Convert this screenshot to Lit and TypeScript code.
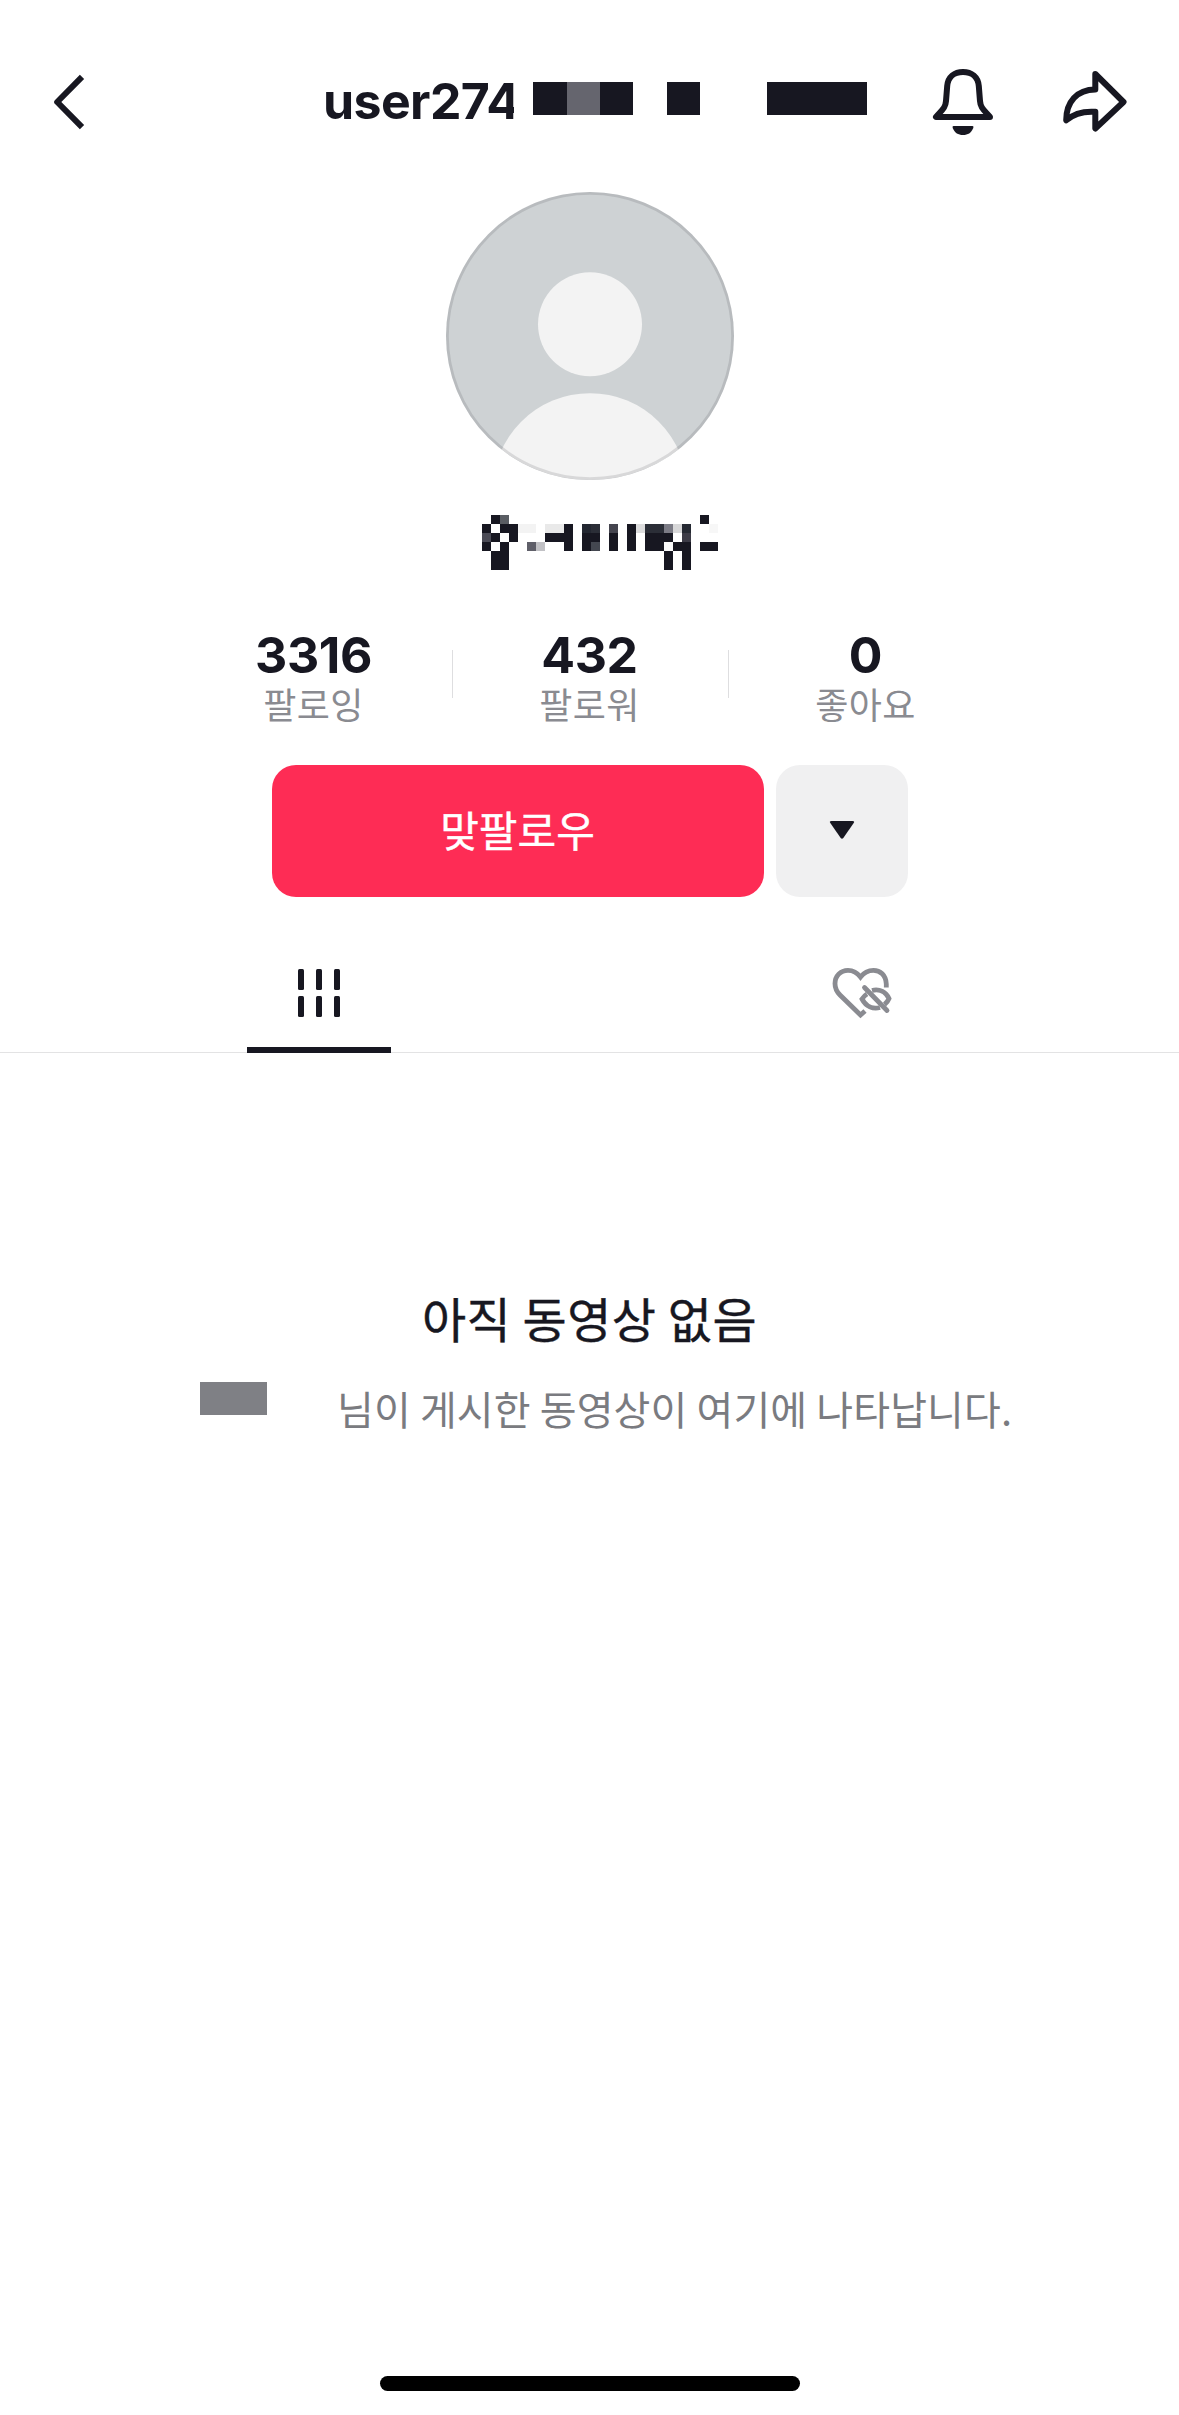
import { LitElement, html, svg, css } from "lit";
import { customElement } from "lit/decorators.js";

const INK = "#171721";

/* Masked nickname: [x, y, width, height, colour] on a 236 x 55 field. */
const MASK: [number, number, number, number, string][] = [
  [9, 0, 9, 9, INK], [18, 0, 9, 9, "#5a5d63"], [218, 0, 9, 9, INK],
  [0, 9, 9, 9, INK], [18, 9, 18, 9, INK], [36, 9, 18, 9, "#f3f3f3"],
  [63, 9, 19, 9, "#e9e9e9"], [82, 9, 9, 9, INK], [100, 9, 9, 9, "#232731"],
  [109, 9, 9, 9, "#2b2e37"], [127, 9, 9, 9, "#45454f"], [145, 9, 9, 9, INK],
  [154, 9, 9, 9, "#dcdcdd"], [163, 9, 19, 9, "#2b2e37"], [182, 9, 9, 9, "#7b7b85"],
  [191, 9, 9, 9, "#d7d7d8"], [200, 9, 9, 9, "#252932"], [227, 9, 9, 9, "#f7f7f7"],
  [0, 18, 9, 9, "#4b4b56"], [9, 18, 9, 9, INK], [27, 18, 9, 9, INK],
  [63, 18, 28, 9, INK], [100, 18, 18, 9, INK], [127, 18, 9, 18, INK],
  [145, 18, 9, 18, INK], [163, 18, 28, 9, INK], [200, 18, 9, 9, "#3c3b46"],
  [0, 27, 9, 9, INK], [18, 27, 9, 9, INK], [45, 27, 9, 9, "#5f5f69"],
  [54, 27, 9, 9, "#c1c1c5"], [82, 27, 9, 9, INK], [100, 27, 9, 9, INK],
  [109, 27, 9, 9, "#444750"], [163, 27, 19, 9, INK], [182, 27, 9, 9, "#fafafa"],
  [191, 27, 18, 9, INK], [218, 27, 18, 9, INK],
  [9, 36, 18, 19, INK], [182, 36, 9, 19, INK], [200, 36, 9, 19, INK],
];

const STATS = [
  { value: "3316", label: "팔로잉" },
  { value: "432", label: "팔로워" },
  { value: "0", label: "좋아요" },
];

@customElement("app-root")
export class AppRoot extends LitElement {
  static styles = css`
    :host {
      display: flex;
      flex-direction: column;
      align-items: center;
      width: 1179px;
      height: 2415px;
      box-sizing: border-box;
      padding-bottom: 24px;
      overflow: hidden;
      background: #fff;
      color: #171721;
      font-family: "Noto Sans CJK KR", sans-serif;
    }
    * { box-sizing: border-box; }
    svg { display: block; flex: none; }
    .header {
      display: flex;
      align-items: center;
      width: 100%;
      height: 132px;
      margin-top: 36px;
      padding: 0 48px 0 42px;
    }
    .title { display: flex; align-items: center; height: 60px; margin-left: 221px; width: 553px; }
    .user {
      flex: none;
      margin-bottom: 3px;
      white-space: nowrap;
      font: 700 50px/60px Inter, sans-serif;
      letter-spacing: -0.6px;
    }
    .blocks { position: absolute; left: 514px; top: 82px; }
    .bell { margin-left: 45px; }
    .share { margin-left: 66px; }
    .avatar { margin-top: 24px; }
    .nick { margin-top: 35px; margin-left: 21px; }
    .stats { display: flex; align-items: flex-start; height: 114px; margin-top: 54px; }
    .stat { display: flex; flex-direction: column; align-items: center; width: 275px; padding-top: 6px; }
    .value { font: 700 50px/50px Inter, sans-serif; letter-spacing: -0.4px; }
    .label { font-size: 36px; line-height: 46px; letter-spacing: 0.3px; color: #8a8b91; }
    .rule { width: 1px; height: 48px; margin: 26px -1px 0 1px; background: #dedee0; }
    .actions { display: flex; gap: 12px; margin-top: 27px; }
    .follow, .more {
      display: flex;
      align-items: center;
      justify-content: center;
      height: 132px;
      border-radius: 24px;
    }
    .follow {
      width: 492px;
      padding-bottom: 4px;
      background: #fe2c55;
      color: #fff;
      font-size: 42px;
      font-weight: 400;
      line-height: 60px;
      -webkit-text-stroke: 0.4px #fff;
    }
    .more { width: 132px; padding-bottom: 2px; background: #f0f0f1; }
    .tabs {
      display: flex;
      justify-content: center;
      gap: 399px;
      width: 100%;
      height: 114px;
      margin-top: 42px;
      padding-left: 2px;
      border-bottom: 1px solid #e3e3e4;
    }
    .tab { display: flex; flex-direction: column; align-items: center; width: 144px; height: 114px; padding-top: 24px; }
    .active { border-bottom: 6px solid #171721; }
    .empty { display: flex; flex-direction: column; align-items: center; width: 100%; margin-top: 229px; }
    .heading {
      font-size: 48px;
      font-weight: 400;
      line-height: 70px;
      letter-spacing: 0.5px;
      -webkit-text-stroke: 0.4px #171721;
    }
    .note { display: flex; width: 811px; height: 60px; margin-top: 28px; margin-left: 32px; color: #7a7b80; }
    .redacted { flex: none; width: 67px; height: 33px; margin-top: 2px; background: #7f8085; }
    .text {
      flex: none;
      margin-top: -2px;
      margin-left: 70px;
      font-size: 40px;
      line-height: 60px;
      letter-spacing: 0.12px;
      white-space: nowrap;
    }
    .home { width: 420px; height: 15px; margin-top: auto; border-radius: 8px; background: #000; }
  `;

  render() {
    return html`
      <div class="header">
        <svg width="60" height="60" viewBox="42 72 60 60" fill="none" stroke=${INK} stroke-width="6" stroke-linejoin="round">
          <path d="M82 76.800L57.200 102L82 127.200" />
        </svg>
        <div class="title">
          <div class="user">user274</div>
          <svg class="blocks" width="353" height="39" shape-rendering="crispEdges" fill=${INK}>
            <rect width="353" height="39" fill="#fff" />
            <rect x="19" width="34" height="33" /><rect x="53" width="33" height="33" fill="#65656e" />
            <rect x="86" width="33" height="33" /><rect x="153" width="33" height="33" />
            <rect x="253" width="100" height="33" />
          </svg>
        </div>
        <svg class="bell" width="72" height="72" viewBox="921 66 72 72" overflow="visible" fill="none" stroke=${INK} stroke-width="6" stroke-linejoin="round">
          <path d="M936 117H990C984 110 980.500 108 980 101L978.800 86C978 77 971.500 72 963 72S948 77 947.200 86L946 101C945.500 108 942 110 936 117Z" />
          <path d="M953.500 126H972.500Q974 126 973.300 128C971 133 968 135 963 135S955 133 952.700 128Q952 126 953.500 126Z" fill=${INK} stroke="none" />
        </svg>
        <svg class="share" width="72" height="72" viewBox="1059 66 72 72" fill="none" stroke=${INK} stroke-width="6" stroke-linejoin="round">
          <path d="M1095.300 74L1123.500 102L1095.300 128.500V111.800C1084 111 1074 113.500 1066.200 120.300C1066.200 102 1077 89.500 1095.300 89.500Z" />
        </svg>
      </div>

      <svg class="avatar" width="288" height="288" viewBox="0 0 288 288">
        <defs><clipPath id="c"><circle cx="144" cy="144" r="144" /></clipPath></defs>
        <g clip-path="url(#c)">
          <rect width="288" height="288" fill="#ced2d4" />
          <circle cx="144" cy="132.300" r="52" fill="#f3f3f3" />
          <circle cx="144" cy="298.500" r="97.300" fill="#f3f3f3" />
        </g>
        <circle cx="144" cy="144" r="142.600" fill="none" stroke="#171721" stroke-opacity=".12" stroke-width="2.800" />
      </svg>

      <svg class="nick" width="236" height="55" shape-rendering="crispEdges">
        ${MASK.map(([x, y, w, h, c]) => svg`<rect x=${x} y=${y} width=${w} height=${h} fill=${c} />`)}
      </svg>

      <div class="stats">
        ${STATS.map((s, i) => html`
          ${i ? html`<div class="rule"></div>` : null}
          <div class="stat"><div class="value">${s.value}</div><div class="label">${s.label}</div></div>
        `)}
      </div>

      <div class="actions">
        <div class="follow">맞팔로우</div>
        <div class="more">
          <svg width="26" height="20" viewBox="0 0 26 20">
            <path d="M2.500 1H23.500Q26 1 24.700 3L14.300 18Q13 19.500 11.700 18L1.300 3Q0 1 2.500 1Z" fill=${INK} />
          </svg>
        </div>
      </div>

      <div class="tabs">
        <div class="tab active">
          <svg width="60" height="60" viewBox="289 963 60 60" fill=${INK}>
            ${[298, 316, 334].map((x) => svg`
              <rect x=${x} y="969" width="6" height="21" rx="1.500" />
              <rect x=${x} y="996" width="6" height="21" rx="1.500" />`)}
          </svg>
        </div>
        <div class="tab">
          <svg width="66" height="60" viewBox="829 963 66 60" fill="none" stroke="#8a8b91" stroke-width="4.800">
            <path d="M886.300 987.500V984C886 975 880 970.300 873.500 970.300C868 970.300 863.500 973 860.500 977C857.500 973 853 970.300 848 970.300C840.500 970.300 835 976 835 983.500C835 988 836.500 991.500 840 995L860.500 1015L865 1011" />
            <path d="M872 990.500C880 988.500 886 992.500 889 998.500C888 1001 886.500 1003 884.500 1004.500M867 994C864.500 995.500 863 997.500 862 999C866 1006.500 873 1009.500 880 1007.500" />
            <path d="M864.500 987.500L887 1010.500" stroke-linecap="round" />
          </svg>
        </div>
      </div>

      <div class="empty">
        <div class="heading">아직 동영상 없음</div>
        <div class="note">
          <div class="redacted"></div>
          <div class="text">님이 게시한 동영상이 여기에 나타납니다.</div>
        </div>
      </div>
      <div class="home"></div>
    `;
  }
}
